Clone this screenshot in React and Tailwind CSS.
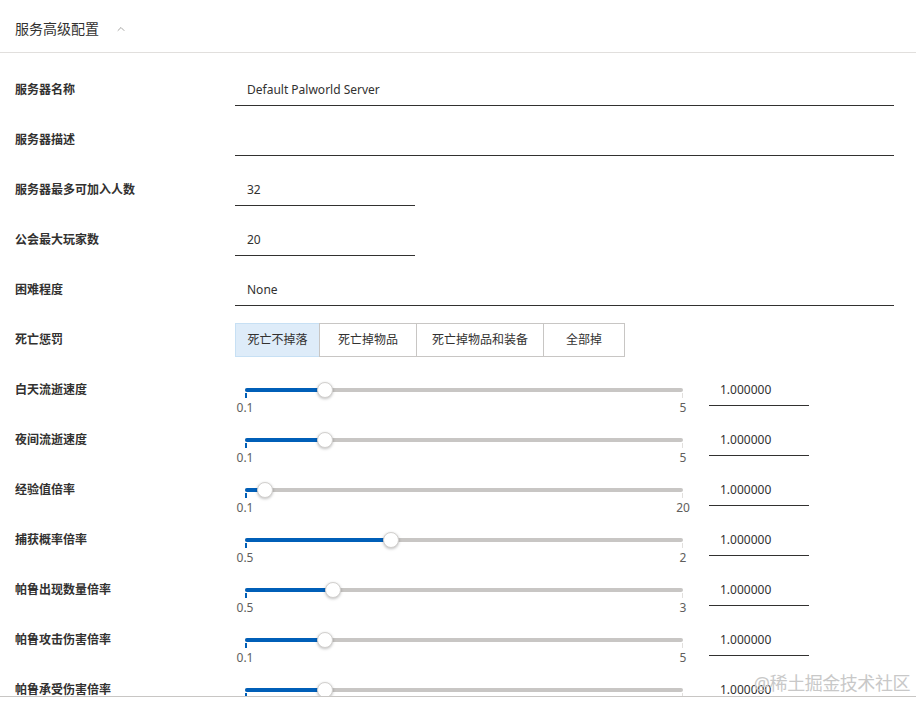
import { ChevronUp } from 'lucide-react'

const font = { fontFamily: '"Noto Sans", "Noto Sans CJK SC", sans-serif' }

const textFields = [
  { label: '服务器名称', value: 'Default Palworld Server', wide: true },
  { label: '服务器描述', value: '', wide: true },
  { label: '服务器最多可加入人数', value: '32' },
  { label: '公会最大玩家数', value: '20' },
  { label: '困难程度', value: 'None', wide: true },
]

const penalties = [
  { text: '死亡不掉落', w: 'w-[85px]' },
  { text: '死亡掉物品', w: 'w-[98px]' },
  { text: '死亡掉物品和装备', w: 'w-[128px]' },
  { text: '全部掉', w: 'w-[82px]' },
]

const sliders = [
  { label: '白天流逝速度', min: 0.1, max: 5, value: 1 },
  { label: '夜间流逝速度', min: 0.1, max: 5, value: 1 },
  { label: '经验值倍率', min: 0.1, max: 20, value: 1 },
  { label: '捕获概率倍率', min: 0.5, max: 2, value: 1 },
  { label: '帕鲁出现数量倍率', min: 0.5, max: 3, value: 1 },
  { label: '帕鲁攻击伤害倍率', min: 0.1, max: 5, value: 1 },
  { label: '帕鲁承受伤害倍率', min: 0.1, max: 5, value: 1 },
]

function Row({ label, children }) {
  return (
    <div className="flex items-start h-[50px] shrink-0">
      <div className="w-[235px] pl-[15px] leading-[32px] text-[12px] font-semibold text-[#323130]">{label}</div>
      {children}
    </div>
  )
}

function Slider({ min, max, value }) {
  const pct = ((value - min) / (max - min)) * 100
  return (
    <div className="w-[458px] px-[10px]">
      <div className="relative h-[32px]">
        <div className="absolute left-0 right-0 top-[14px] h-[4px] rounded-full bg-[#c8c6c4]" />
        <div className="absolute left-0 top-[14px] h-[4px] rounded-full bg-[#005fb8]" style={{ width: `${pct}%` }} />
        <div className="absolute left-0 top-[19px] w-[2px] h-[5px] bg-[#005fb8]" />
        <div className="absolute right-0 top-[19px] w-[1px] h-[5px] bg-[#e1dfdd]" />
        <div
          className="absolute top-[8px] w-[16px] h-[16px] -ml-[8px] rounded-full bg-white border border-[#d2d0ce] shadow-[0_1px_3px_rgba(0,0,0,0.25)]"
          style={{ left: `${pct}%` }}
        />
        <div className="absolute top-[26px] left-0 -translate-x-1/2 text-[12px] leading-[16px] text-[#605e5c]">{min}</div>
        <div className="absolute top-[26px] right-0 translate-x-1/2 text-[12px] leading-[16px] text-[#605e5c]">{max}</div>
      </div>
    </div>
  )
}

export default function App() {
  return (
    <div className="h-[701px] w-[916px] overflow-hidden bg-white text-[#323130]" style={font}>
      <div className="h-[53px] border-b border-[#e1dfdd] flex items-center pl-[15px] pt-[5px]">
        <span className="text-[14px]">服务高级配置</span>
        <ChevronUp size={12} strokeWidth={1.5} className="ml-[16px] text-[#8a8886]" />
      </div>
      <div className="h-[644px] overflow-hidden border-b border-[#c8c6c4] pt-[21px] flex flex-col">
        {textFields.map(f => (
          <Row key={f.label} label={f.label}>
            <div className={`${f.wide ? 'w-[659px]' : 'w-[180px]'} h-[32px] border-b border-[#323130] pl-[12px] flex items-center text-[12px]`}>
              {f.value}
            </div>
          </Row>
        ))}
        <Row label="死亡惩罚">
          <div className="flex h-[34px] -mt-px">
            {penalties.map((p, i) => (
              <div
                key={p.text}
                className={`${p.w} flex items-center justify-center text-[12px] border ${i === 0 ? 'bg-[#deecf9] border-[#c7e0f4]' : 'bg-white border-[#c8c6c4] -ml-px'}`}
              >
                {p.text}
              </div>
            ))}
          </div>
        </Row>
        {sliders.map(s => (
          <Row key={s.label} label={s.label}>
            <Slider min={s.min} max={s.max} value={s.value} />
            <div className="ml-[16px] w-[100px] h-[32px] border-b border-[#323130] pl-[11px] flex items-center text-[12px]">
              {s.value.toFixed(6)}
            </div>
          </Row>
        ))}
      </div>
      <div className="relative">
        <span className="absolute right-[6px] -top-[27px] text-[18px] text-[#c8c8c8] tracking-tight">@稀土掘金技术社区</span>
      </div>
    </div>
  )
}
